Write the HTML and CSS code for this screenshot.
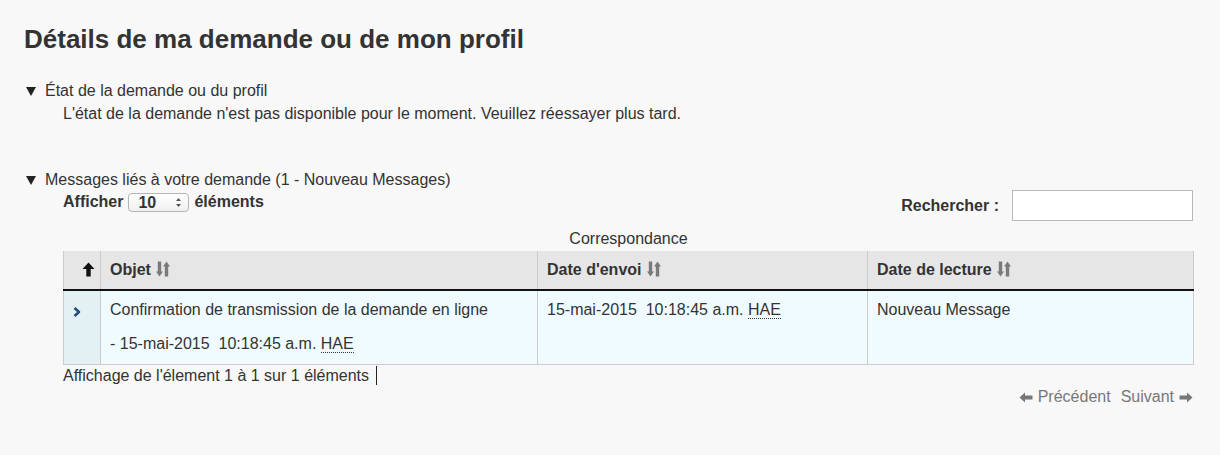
FILE: index.html
```html
<!DOCTYPE html>
<html lang="fr">
<head>
<meta charset="utf-8">
<title>Détails de ma demande ou de mon profil</title>
<link rel="stylesheet" href="styles.css">
</head>
<body>
<main class="page">
  <h1 class="title">Détails de ma demande ou de mon profil</h1>

  <section class="block block-status">
    <div class="block-head"><span class="tri"></span>État de la demande ou du profil</div>
    <p class="block-body">L'état de la demande n'est pas disponible pour le moment. Veuillez réessayer plus tard.</p>
  </section>

  <section class="block block-messages">
    <div class="block-head"><span class="tri"></span>Messages liés à votre demande (1 - Nouveau Messages)</div>
    <div class="msg-wrap">
      <div class="controls">
        <div class="length">
          <span>Afficher</span>
          <span class="select"><span class="select-val">10</span><svg class="spin" width="7" height="11" viewBox="0 0 7 11"><path d="M3.5 1 L6 4 H1 Z M3.5 10 L6 7 H1 Z" fill="#555"/></svg></span>
          <span>éléments</span>
        </div>
        <div class="search">
          <span>Rechercher :</span>
          <span class="input"></span>
        </div>
      </div>
      <table class="grid">
        <caption>Correspondance</caption>
        <colgroup>
          <col class="c0"><col class="c1"><col class="c2"><col class="c3">
        </colgroup>
        <thead>
          <tr>
            <th class="ctl-h"><svg width="13" height="15" viewBox="0 0 13 15"><path d="M6.5 0.5 L12.5 7 H8.7 V14.5 H4.3 V7 H0.5 Z" fill="#111"/></svg></th>
            <th>Objet <svg class="sort" width="14" height="16" viewBox="0 0 14 16"><path d="M1.8 0.5 H5.2 V10.5 H7 L3.5 15.5 L0 10.5 H1.8 Z M8.8 15.5 H12.2 V5.5 H14 L10.5 0.5 L7 5.5 H8.8 Z" fill="#7a7a7a"/></svg></th>
            <th>Date d'envoi <svg class="sort" width="14" height="16" viewBox="0 0 14 16"><path d="M1.8 0.5 H5.2 V10.5 H7 L3.5 15.5 L0 10.5 H1.8 Z M8.8 15.5 H12.2 V5.5 H14 L10.5 0.5 L7 5.5 H8.8 Z" fill="#7a7a7a"/></svg></th>
            <th>Date de lecture <svg class="sort" width="14" height="16" viewBox="0 0 14 16"><path d="M1.8 0.5 H5.2 V10.5 H7 L3.5 15.5 L0 10.5 H1.8 Z M8.8 15.5 H12.2 V5.5 H14 L10.5 0.5 L7 5.5 H8.8 Z" fill="#7a7a7a"/></svg></th>
          </tr>
        </thead>
        <tbody>
          <tr>
            <td class="ctl"><svg width="8" height="10" viewBox="0 0 8 10"><path d="M1.5 1 L6 5 L1.5 9" fill="none" stroke="#1f4e79" stroke-width="2.6" stroke-linejoin="round"/></svg></td>
            <td><div class="line">Confirmation de transmission de la demande en ligne</div><div class="line line2">- 15-mai-2015&nbsp; 10:18:45 a.m. <abbr title="Heure avancée de l'Est">HAE</abbr></div></td>
            <td><div class="line">15-mai-2015&nbsp; 10:18:45 a.m. <abbr title="Heure avancée de l'Est">HAE</abbr></div></td>
            <td><div class="line">Nouveau Message</div></td>
          </tr>
        </tbody>
      </table>
      <div class="info">Affichage de l'élement 1 à 1 sur 1 éléments <span class="caret"></span></div>
      <div class="paging">
        <a class="pg"><svg width="14" height="11" viewBox="0 0 14 11"><path d="M0.5 5.5 L6 0.5 V3.5 H13.5 V7.5 H6 V10.5 Z" fill="#777"/></svg>Précédent</a>
        <a class="pg">Suivant<svg width="14" height="11" viewBox="0 0 14 11"><path d="M13.5 5.5 L8 0.5 V3.5 H0.5 V7.5 H8 V10.5 Z" fill="#777"/></svg></a>
      </div>
    </div>
  </section>
</main>
</body>
</html>
```

FILE: styles.css
```css
html, body {
  margin: 0;
  padding: 0;
  background: #f8f8f8;
}
body {
  font-family: "Liberation Sans", Arial, Helvetica, sans-serif;
  font-size: 16px;
  color: #333;
}
.page {
  padding: 24px 27px 20px 24px;
}
.title {
  font-size: 26px;
  font-weight: bold;
  line-height: 30px;
  margin: 0 0 26px 0;
  color: #333;
}
.block-head {
  display: flex;
  align-items: center;
  line-height: 22px;
  padding-left: 2px;
}
.tri {
  width: 0;
  height: 0;
  border-left: 5px solid transparent;
  border-right: 5px solid transparent;
  border-top: 9px solid #222;
  margin-right: 9px;
  margin-top: 1px;
}
.block-body {
  margin: 1px 0 0 39px;
  line-height: 22px;
}
.block-status {
  margin-bottom: 44px;
}
.msg-wrap {
  margin-left: 39px;
}
.controls {
  display: flex;
  justify-content: space-between;
  align-items: flex-start;
}
.length {
  display: flex;
  align-items: center;
  gap: 5px;
  font-weight: bold;
  margin-top: 1px;
  line-height: 20px;
}
.select {
  display: inline-flex;
  align-items: center;
  justify-content: space-between;
  width: 61px;
  height: 19px;
  box-sizing: border-box;
  border: 1px solid #b5b5b5;
  border-radius: 4px;
  background: linear-gradient(#ffffff, #f0f0f0);
  padding: 0 6px 0 9px;
  font-weight: bold;
}
.select-val {
  line-height: 17px;
}
.search {
  display: flex;
  align-items: center;
  gap: 13px;
  font-weight: bold;
  margin-top: -1px;
}
.input {
  display: block;
  width: 181px;
  height: 31px;
  box-sizing: border-box;
  border: 1px solid #b8b8b8;
  background: #fff;
}
.grid {
  width: 1130px;
  border-collapse: collapse;
  table-layout: fixed;
  margin-top: 7px;
}
.grid caption {
  line-height: 22px;
  padding-bottom: 1px;
  text-align: center;
}
.c0 { width: 37px; }
.c1 { width: 437px; }
.c2 { width: 330px; }
.c3 { width: 326px; }
.grid th {
  background: #e6e6e6;
  text-align: left;
  font-weight: bold;
  height: 38px;
  padding: 0 9px;
  border-left: 1px solid #ccc;
  border-right: 1px solid #ccc;
  border-bottom: 2px solid #111;
  vertical-align: middle;
}
.grid th .sort {
  vertical-align: -2px;
  margin-left: 1px;
}
.grid th.ctl-h {
  text-align: right;
  padding: 0 5px 0 0;
}
.grid th.ctl-h svg {
  vertical-align: -2px;
}
.grid td {
  background: #f0fbff;
  border: 1px solid #ccc;
  border-top: 0;
  padding: 8px 9px 9px 9px;
  vertical-align: top;
}
.grid td.ctl {
  background: #e4f1f4;
  padding: 12px 0 0 9px;
}
.line {
  line-height: 22px;
}
.line2 {
  margin-top: 12px;
}
abbr {
  text-decoration: none;
  border-bottom: 1px dotted #333;
}
.info {
  line-height: 22px;
  margin-top: 0;
}
.caret {
  display: inline-block;
  width: 1px;
  height: 19px;
  background: #222;
  vertical-align: -4px;
  margin-left: 2px;
}
.paging {
  display: flex;
  justify-content: flex-end;
  gap: 10px;
  margin-top: -1px;
}
.pg {
  color: #777;
  display: inline-flex;
  align-items: center;
  gap: 5px;
  line-height: 22px;
}
```
